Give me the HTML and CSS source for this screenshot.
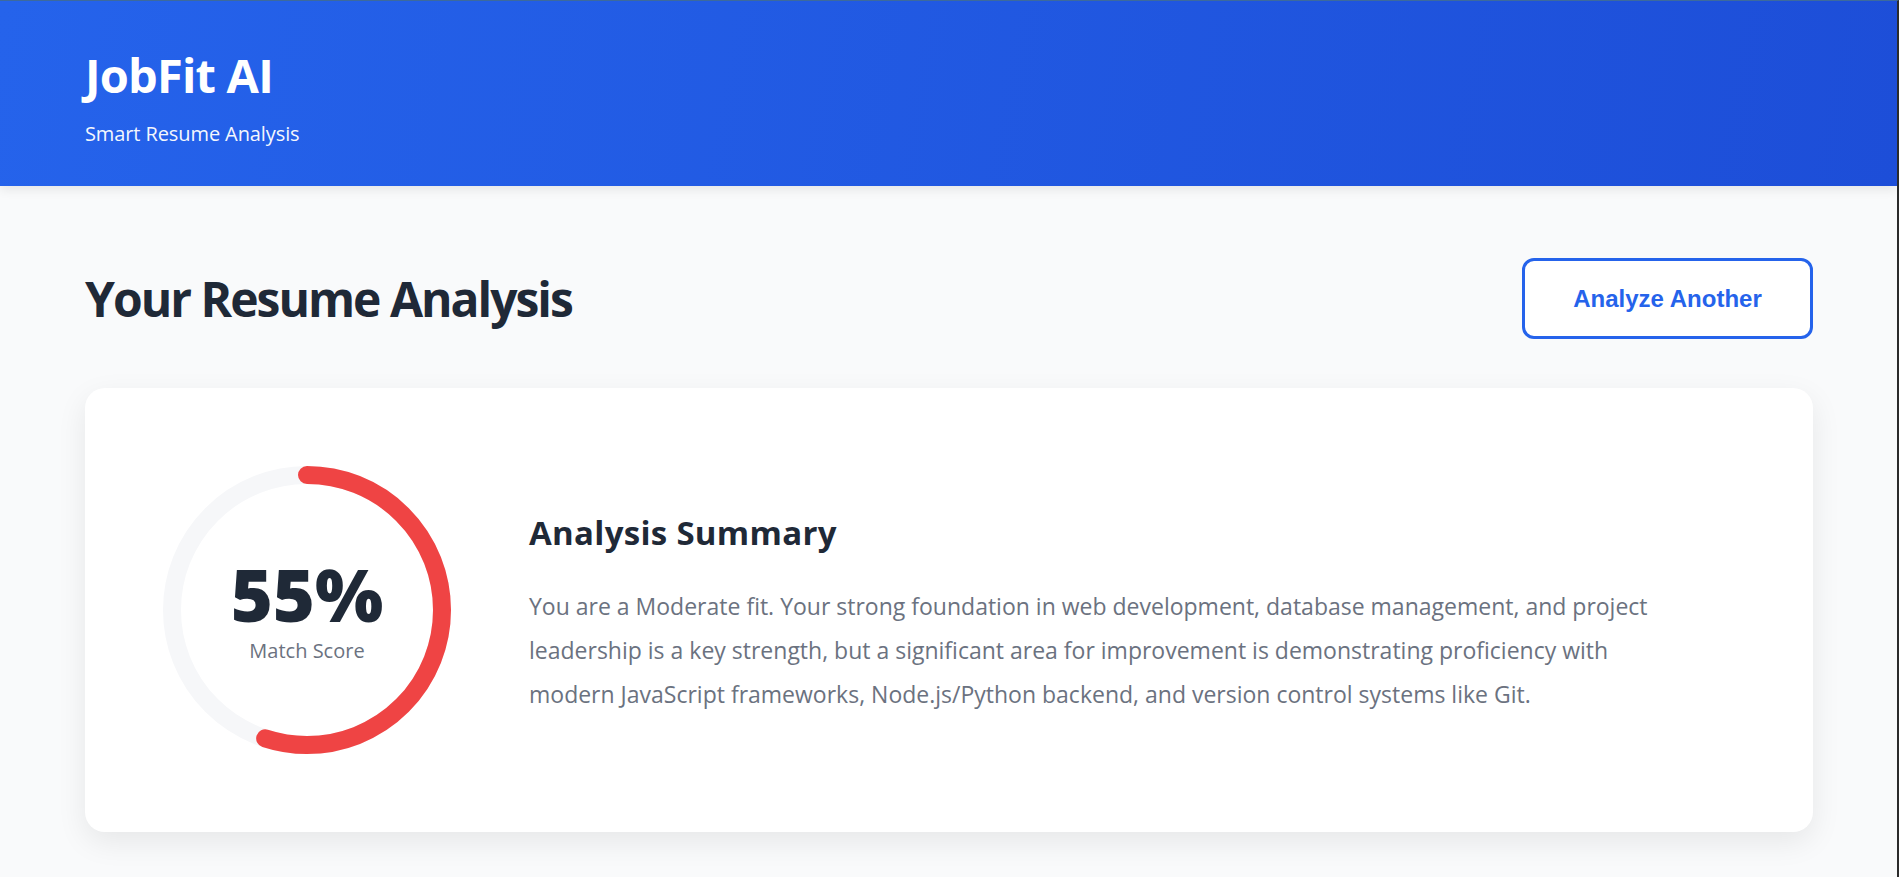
FILE: index.html
```html
<!DOCTYPE html>
<html lang="en">
<head>
<meta charset="utf-8">
<title>JobFit AI</title>
<link rel="stylesheet" href="styles.css">
</head>
<body>
<header class="site-header">
  <h1 class="brand">JobFit AI</h1>
  <p class="tagline">Smart Resume Analysis</p>
</header>
<main class="page">
  <div class="page-head">
    <h2 class="page-title">Your Resume Analysis</h2>
    <button class="btn-outline" type="button">Analyze Another</button>
  </div>
  <section class="card">
    <div class="score">
      <svg class="score-ring" width="288" height="288" viewBox="0 0 288 288">
        <circle cx="144" cy="144" r="135" fill="none" stroke="#f6f7f9" stroke-width="18"/>
        <circle cx="144" cy="144" r="135" fill="none" stroke="#ef4444" stroke-width="18" stroke-linecap="round" stroke-dasharray="466.5 848.2" transform="rotate(-90 144 144)"/>
      </svg>
      <div class="score-label">
        <span class="score-value">55%</span>
        <span class="score-caption">Match Score</span>
      </div>
    </div>
    <div class="summary">
      <h3 class="summary-title">Analysis Summary</h3>
      <p class="summary-text">You are a Moderate fit. Your strong foundation in web development, database management, and project leadership is a key strength, but a significant area for improvement is demonstrating proficiency with modern JavaScript frameworks, Node.js/Python backend, and version control systems like Git.</p>
    </div>
  </section>
</main>
</body>
</html>
```

FILE: styles.css
```css
* { box-sizing: border-box; }

html, body { height: 100%; }

body {
  margin: 0;
  background: #f9fafb;
  font-family: "Open Sans", "Noto Sans", sans-serif;
  color: #1f2937;
  border-top: 1px solid #3d6a9c;
  border-right: 2px solid #2b2b2b;
}

.site-header {
  height: 185px;
  padding: 46px 85px 0;
  background: linear-gradient(100deg, #2563eb 0%, #1d4ed8 100%);
  color: #fff;
  box-shadow: 0 4px 10px rgba(0, 0, 0, 0.08);
  position: relative;
}

.brand {
  margin: 0;
  font-size: 47px;
  font-weight: 700;
  line-height: 56px;
  letter-spacing: -0.8px;
}

.tagline {
  margin: 17px 0 0;
  font-size: 20px;
  line-height: 28px;
  letter-spacing: -0.1px;
  opacity: 0.95;
}

.page {
  padding: 72px 84px 0 85px;
}

.page-head {
  display: flex;
  align-items: center;
  justify-content: space-between;
}

.page-title {
  margin: 0;
  font-size: 48px;
  font-weight: 700;
  line-height: 60px;
  color: #1f2937;
  letter-spacing: -2px;
}

.btn-outline {
  width: 291px;
  height: 81px;
  border: 3px solid #2563eb;
  border-radius: 12px;
  background: #fff;
  color: #2563eb;
  font-family: "Liberation Sans", Arial, sans-serif;
  font-size: 24px;
  font-weight: 700;
  cursor: pointer;
}

.card {
  margin-top: 49px;
  background: #fff;
  border-radius: 20px;
  box-shadow: 0 10px 30px rgba(0, 0, 0, 0.08);
  padding: 78px 80px 78px 78px;
  display: flex;
  align-items: center;
  gap: 78px;
}

.score {
  display: grid;
  flex: none;
  width: 288px;
  height: 288px;
}

.score-ring, .score-label {
  grid-area: 1 / 1;
}

.score-label {
  display: flex;
  flex-direction: column;
  align-items: center;
  justify-content: center;
  padding-top: 2px;
}

.score-value {
  font-size: 72px;
  font-weight: 800;
  line-height: 72px;
  color: #1f2937;
}

.score-caption {
  margin-top: 8px;
  font-size: 20px;
  line-height: 26px;
  color: #6b7280;
}

.summary {
  flex: 1;
  padding-top: 9px;
}

.summary-title {
  margin: 0 0 31px;
  font-size: 33px;
  font-weight: 700;
  line-height: 40px;
  letter-spacing: 0.3px;
  color: #1f2937;
}

.summary-text {
  margin: 0;
  max-width: 1162px;
  font-size: 23px;
  line-height: 44px;
  color: #6b7280;
}
```
